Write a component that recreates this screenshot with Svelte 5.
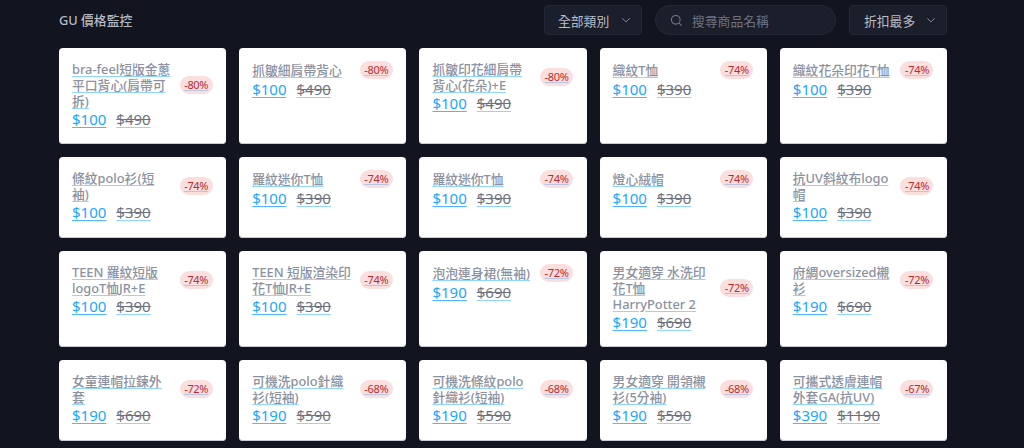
<script>
  const items = [
    ['bra-feel短版金蔥\n平口背心(肩帶可\n拆)', 100, 490, 80],
    ['抓皺細肩帶背心', 100, 490, 80],
    ['抓皺印花細肩帶\n背心(花朵)+E', 100, 490, 80],
    ['織紋T恤', 100, 390, 74],
    ['織紋花朵印花T恤', 100, 390, 74],
    ['條紋polo衫(短\n袖)', 100, 390, 74],
    ['羅紋迷你T恤', 100, 390, 74],
    ['羅紋迷你T恤', 100, 390, 74],
    ['燈心絨帽', 100, 390, 74],
    ['抗UV斜紋布logo\n帽', 100, 390, 74],
    ['TEEN 羅紋短版\nlogoT恤JR+E', 100, 390, 74],
    ['TEEN 短版渲染印\n花T恤JR+E', 100, 390, 74],
    ['泡泡連身裙(無袖)', 190, 690, 72],
    ['男女適穿 水洗印\n花T恤\nHarryPotter 2', 190, 690, 72],
    ['府綢oversized襯\n衫', 190, 690, 72],
    ['女童連帽拉鍊外\n套', 190, 690, 72],
    ['可機洗polo針織\n衫(短袖)', 190, 590, 68],
    ['可機洗條紋polo\n針織衫(短袖)', 190, 590, 68],
    ['男女適穿 開領襯\n衫(5分袖)', 190, 590, 68],
    ['可攜式透膚連帽\n外套GA(抗UV)', 390, 1190, 67]
  ];
</script>

<div class="page">
  <header class="top">
    <h1>GU 價格監控</h1>
    <div class="controls">
      <button class="select cat">全部類別
        <svg viewBox="0 0 12 12" width="10" height="10"><path d="M1.500 4 6 8.200 10.500 4" /></svg>
      </button>
      <div class="search">
        <svg viewBox="0 0 14 14" width="13" height="13"><circle cx="6.200" cy="6.200" r="4.700" /><path d="m9.800 9.800 2.700 2.700" /></svg>
        <span>搜尋商品名稱</span>
      </div>
      <button class="select sort">折扣最多
        <svg viewBox="0 0 12 12" width="10" height="10"><path d="M1.500 4 6 8.200 10.500 4" /></svg>
      </button>
    </div>
  </header>
  <main class="grid">
    {#each items as [name, now, was, off]}
      <a class="card" href="#top">
        <div class="head">
          <span class="name">{name}</span>
          <span class="badge">-{off}%</span>
        </div>
        <div class="price"><span class="now">${now}</span><span class="was"><del>${was}</del></span></div>
      </a>
    {/each}
  </main>
</div>

<style>
  :global(body) {
    background: #12151f;
    overflow: hidden;
  }
  .page {
    height: 448px;
    overflow: hidden;
    padding: 5px 77px 0 59px;
    font-family: "Noto Sans", "Noto Sans CJK TC", sans-serif;
  }
  .top {
    display: flex;
    align-items: center;
    justify-content: space-between;
    height: 30px;
    margin-bottom: 13px;
  }
  h1 {
    margin: 0 0 1px;
    font-size: 12.800px;
    font-weight: 500;
    color: #b4b9c4;
  }
  .controls {
    display: flex;
    gap: 13px;
  }
  .select, .search {
    display: flex;
    align-items: center;
    box-sizing: border-box;
    height: 30px;
    background: #1b1f2c;
    border: 1px solid #242937;
    font: inherit;
    font-size: 12.800px;
  }
  .select {
    justify-content: space-between;
    padding: 0 10px 0 13px;
    border-radius: 4px;
    color: #b9bdc6;
  }
  .cat { width: 98px; }
  .sort { width: 98px; padding-left: 14px; }
  .select svg path {
    fill: none;
    stroke: #8b90a0;
    stroke-width: 1.100;
  }
  .search {
    width: 181px;
    gap: 9px;
    padding: 0 14px;
    border-radius: 15px;
    color: #6d7383;
  }
  .search svg {
    fill: none;
    stroke: #717787;
    stroke-width: 1.100;
  }
  .grid {
    display: grid;
    grid-template-columns: repeat(5, 1fr);
    gap: 13px;
  }
  .card {
    display: block;
    box-sizing: border-box;
    padding: 13px 13.500px 13.400px 13px;
    background: #fff;
    border-radius: 4px;
    box-shadow: inset 0 -1px 0 #c9ccd4;
    text-decoration: none;
  }
  .head {
    display: flex;
    align-items: center;
    justify-content: space-between;
    gap: 7px;
  }
  .name {
    flex: 1;
    min-width: 0;
    white-space: pre;
    font-size: 12.800px;
    line-height: 16px;
    font-weight: 500;
    color: #8b91a0;
    text-decoration: underline #91d5ff;
    text-underline-offset: 2px;
  }
  .badge {
    flex: none;
    box-sizing: border-box;
    width: 33px;
    height: 18px;
    line-height: 17px;
    text-align: center;
    font-size: 11px;
    letter-spacing: -0.300px;
    color: #b92b30;
    background: #fbdede;
    border-radius: 9px;
    text-decoration: underline #b8c6e4;
  }
  .price {
    display: block;
    font-size: 15px;
    line-height: 21px;
    height: 22px;
  }
  .now {
    color: #19a7ff;
    padding-right: 3px;
    margin-right: 7px;
    text-decoration: underline #4db8ff;
    text-underline-offset: 2px;
  }
  .was {
    text-decoration: underline #91d5ff;
    text-underline-offset: 2px;
  }
  del {
    color: #6c7280;
    text-decoration: line-through #6c7280;
  }
</style>
